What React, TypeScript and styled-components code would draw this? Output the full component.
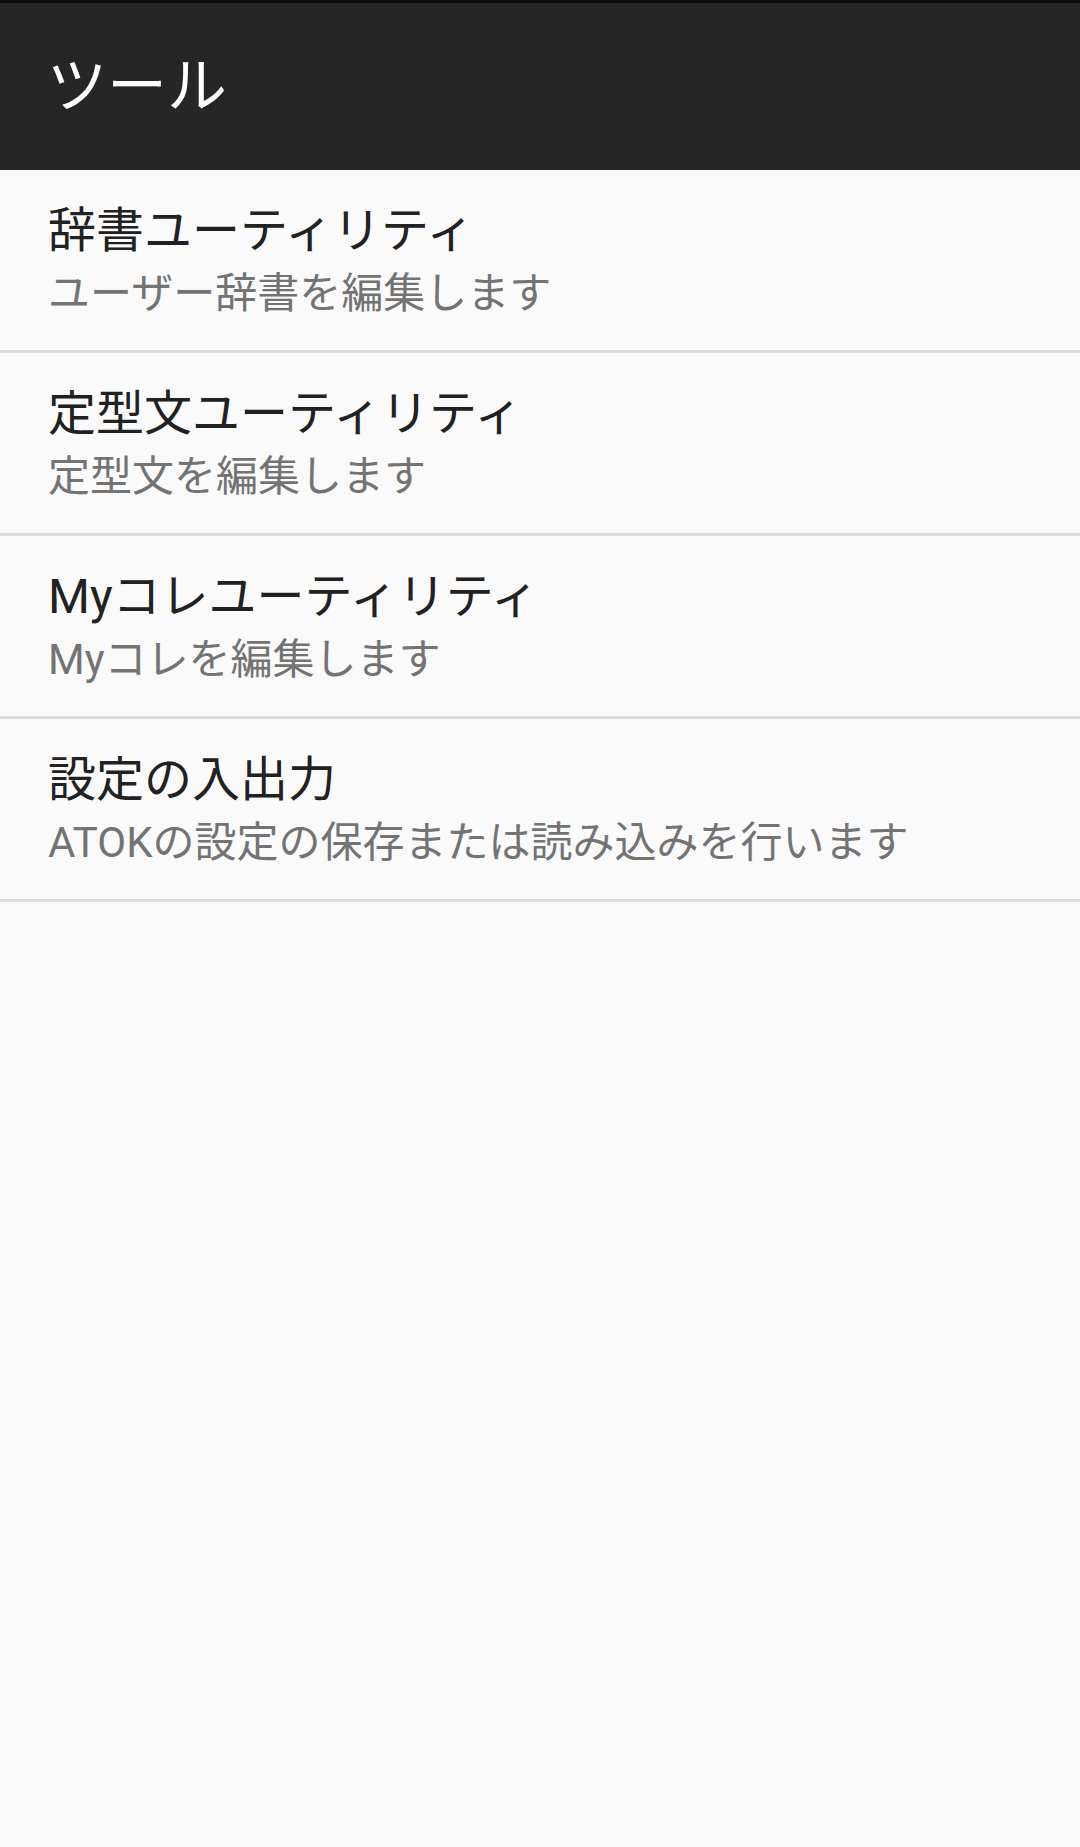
import React from 'react';
import styled, { createGlobalStyle } from 'styled-components';

const items = [
  { title: '辞書ユーティリティ', summary: 'ユーザー辞書を編集します' },
  { title: '定型文ユーティリティ', summary: '定型文を編集します' },
  { title: 'Myコレユーティリティ', summary: 'Myコレを編集します' },
  { title: '設定の入出力', summary: 'ATOKの設定の保存または読み込みを行います' },
];

const App: React.FC = () => {
  return (
    <>
      <GlobalStyle />
      <Screen>
        <StatusEdge />
        <Toolbar>
          <ToolbarTitle>ツール</ToolbarTitle>
        </Toolbar>
        <List>
          {items.map((item) => (
            <Row key={item.title}>
              <RowTitle>{item.title}</RowTitle>
              <RowSummary>{item.summary}</RowSummary>
            </Row>
          ))}
        </List>
      </Screen>
    </>
  );
};

export default App;

const GlobalStyle = createGlobalStyle`
  html, body {
    margin: 0;
    padding: 0;
    background: #fafafa;
  }
  body {
    font-family: Roboto, 'Noto Sans CJK JP', sans-serif;
  }
`;

const Screen = styled.div`
  width: 1080px;
  min-height: 1847px;
  background: #fafafa;
  display: flex;
  flex-direction: column;
`;

const StatusEdge = styled.div`
  height: 3px;
  background: #0c0c0c;
`;

const Toolbar = styled.header`
  box-sizing: border-box;
  height: 167px;
  background: #262626;
  display: flex;
  align-items: center;
  padding-left: 47px;
`;

const ToolbarTitle = styled.h1`
  margin: 0;
  color: #ffffff;
  font-size: 60px;
  font-weight: 400;
  line-height: 70px;
`;

const List = styled.div`
  display: flex;
  flex-direction: column;
`;

const Row = styled.div`
  box-sizing: border-box;
  height: 183px;
  padding: 31px 48px 0;
  border-bottom: 3px solid #dcdcdc;
`;

const RowTitle = styled.div`
  color: #212121;
  font-size: 48px;
  line-height: 60px;
  white-space: nowrap;
`;

const RowSummary = styled.div`
  margin-top: 3px;
  color: #737373;
  font-size: 42px;
  line-height: 60px;
  white-space: nowrap;
`;
